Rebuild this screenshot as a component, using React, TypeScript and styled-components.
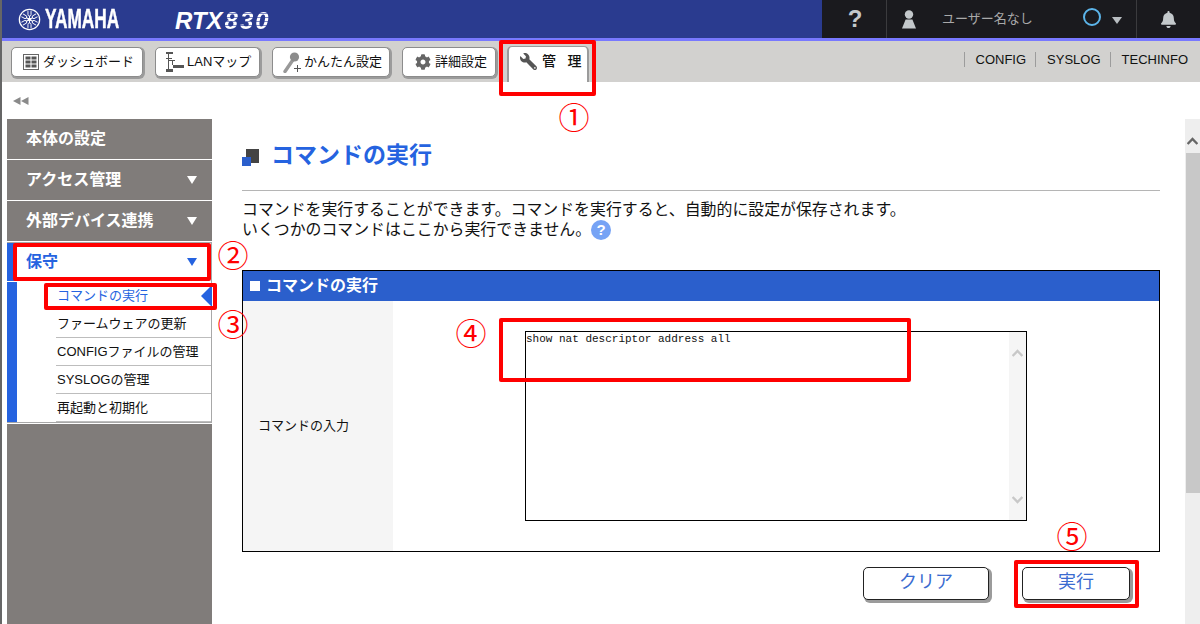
import React from 'react';
import styled, { createGlobalStyle } from 'styled-components';
import { FaBell, FaCog, FaWrench } from 'react-icons/fa';

const Global = createGlobalStyle`
  html, body { margin: 0; padding: 0; background: #fff; }
  body { font-family: "Liberation Sans", "Noto Sans CJK JP", sans-serif; overflow: hidden; }
  * { box-sizing: border-box; }
`;

const Frame = styled.div`
  position: relative; width: 1200px; height: 624px; overflow: hidden;
  border-left: 2px solid #666; display: flex; flex-direction: column;
`;
const TopBar = styled.header`
  height: 41px; flex: none; display: flex; background: #2a3b8f; border-bottom: 3px solid #7878ff;
`;
const Brand = styled.div`
  display: flex; align-items: center; padding-left: 16px; width: 821px; gap: 4px; color: #fff;
`;
const YamahaWord = styled.span`
  display: block; width: 75px; height: 38px; line-height: 38px; margin-top: -1px; font-size: 27px; font-weight: 700;
  -webkit-text-stroke: 0.5px #fff;
  transform: scaleX(.64); transform-origin: left center; white-space: nowrap;
`;
const ModelName = styled.span`
  display: flex; margin-left: 51px; font-size: 24px; font-weight: 700; font-style: italic; line-height: 38px; margin-top: 3px;
`;
const ModelDigits = styled.span`
  margin-left: 2px; letter-spacing: 2px;
  background: repeating-linear-gradient(180deg, #fff 0 3px, #7e88c4 3px 4px);
  -webkit-background-clip: text; background-clip: text; color: transparent;
`;
const UtilBar = styled.div`
  flex: 1; display: flex; background: #1a1a1e; color: #c3c8cb;
`;
const UtilCell = styled.div<{ $w: number; $pad?: number }>`
  width: ${p => p.$w}px; flex: none; display: flex; align-items: center; border-right: 1px solid #3b3b3e; padding-left: ${p => p.$pad ?? 0}px;
  &:last-child { border-right: 0; }
`;
const HelpMark = styled.span`
  width: 100%; text-align: center; font-size: 24px; font-weight: 700; line-height: 38px; padding-left: 2px;
`;
const UserName = styled.span`
  font-size: 13px; color: #a9a9a9; margin-left: 26px; width: 141px; white-space: nowrap; line-height: 38px;
`;
const Ring = styled.span`
  width: 18px; height: 18px; border: 2.5px solid #5cb5ea; border-radius: 50%; margin-top: -5px; flex: none;
`;
const Caret = styled.span`
  width: 0; height: 0; margin-left: 11px; margin-top: 2px;
  border-left: 5px solid transparent; border-right: 5px solid transparent; border-top: 7px solid #b9bec2;
`;
const BellSlot = styled.span`
  width: 100%; display: flex; justify-content: center; color: #c3c8cb; font-size: 17px;
`;

const ToolBar = styled.nav`
  height: 41px; flex: none; display: flex; background: #d2d1cf; padding: 6px 0 0 9px; gap: 12px;
`;
const ToolButton = styled.button<{ $w: number; $pad: number; $gap: number }>`
  width: ${p => p.$w}px; height: 30px; margin: 0; padding: 0 0 0 ${p => p.$pad}px; background: #fff; border: 1px solid #8c8c8c; border-radius: 5px;
  box-shadow: 1px 1px 0 1px #9b9b9b; font: inherit; font-size: 13px; color: #111; display: flex; align-items: center; gap: ${p => p.$gap}px; white-space: nowrap;
  svg { flex: none; }
`;
const ToolLabel = styled.span`
  display: block; margin-top: -4px;
`;
const ActiveTab = styled.div`
  width: 82px; height: 36px; margin: -1px 0 0 -1px; background: #fff; border: 2px solid #9b9b9b; border-bottom: 0; border-top-width: 1px;
  border-radius: 5px 5px 0 0; display: flex; align-items: flex-start; padding: 5px 0 0 11px; gap: 5px; font-size: 14px; line-height: 18px; color: #111; font-weight: 500;
  letter-spacing: -1.3px; white-space: pre;
`;
const WrenchIcon = styled(FaWrench)`
  transform: scaleX(-1); color: #555; font-size: 17px; margin-top: 1px; flex: none;
`;
const QuickLinks = styled.div`
  margin-left: auto; display: flex; align-items: flex-start; padding-top: 5px;
`;
const QuickLink = styled.a`
  font-size: 13px; line-height: 15px; height: 15px; color: #111; padding: 0 9px 0 11px; border-left: 1px solid #9c9c9c; white-space: nowrap;
  &:last-child { padding-right: 12px; }
`;

const Body = styled.div`
  flex: 1; display: flex; min-height: 0;
`;
const Side = styled.aside`
  width: 205px; margin-left: 5px; flex: none; display: flex; flex-direction: column;
`;
const Collapse = styled.div`
  height: 37px; flex: none; display: flex; align-items: flex-start; padding: 15px 0 0 6px;
`;
const MenuItem = styled.div`
  height: 40px; flex: none; margin-bottom: 1px; background: #807c7a; color: #fff; font-size: 16px; font-weight: 700; line-height: 36px; padding: 0 15px 0 19px;
  display: flex; align-items: center; justify-content: space-between;
`;
const Tri = styled.span<{ $c: string }>`
  width: 0; height: 0; border-left: 5.5px solid transparent; border-right: 5.5px solid transparent; border-top: 8px solid ${p => p.$c};
`;
const Group = styled.div`
  flex: none; border: 1px solid #a8a8a8; border-left: 0; margin-bottom: 1px; background: #fff;
`;
const GroupHead = styled.div`
  height: 38px; border-left: 10px solid #2563e0; margin-bottom: 1px; padding: 0 14px 0 9px; color: #2563e0; font-size: 16px; font-weight: 700; line-height: 36px;
  display: flex; align-items: center; justify-content: space-between;
`;
const SubList = styled.div`
  border-left: 10px solid #2563e0; padding-left: 39px;
`;
const SubItem = styled.div<{ $on?: boolean }>`
  position: relative; height: 28px; padding-left: 1px; font-size: 13px; line-height: 28px; white-space: nowrap;
  color: ${p => (p.$on ? '#2563e0' : '#111')}; border-bottom: 1px solid #bdbdbd;
`;
const SubMarker = styled.span`
  position: absolute; right: -1px; top: 3px; width: 0; height: 0;
  border-top: 11px solid transparent; border-bottom: 11px solid transparent; border-right: 11px solid #2563e0;
`;
const SideFill = styled.div`
  flex: 1; background: #807c7a;
`;
const Main = styled.main`
  flex: none; width: 973px; padding: 58px 0 0 30px;
`;
const TitleRow = styled.div`
  width: 918px; height: 51px; border-bottom: 1px solid #b5b5b5; display: flex; align-items: flex-start; gap: 13px;
`;
const TitleIcon = styled.svg`
  flex: none; margin-top: 9px;
`;
const Title = styled.h1`
  margin: 0 0 0 -1px; font-size: 23px; font-weight: 700; color: #2563e0; line-height: 30px;
`;
const Description = styled.p`
  margin: 9px 0 0; font-size: 15.9px; line-height: 20px; color: #111; white-space: nowrap;
`;
const HelpBadge = styled.span`
  display: inline-block; width: 20px; height: 20px; border-radius: 50%; background: #76a3f5; color: #fff; font-size: 15px; font-weight: 700;
  line-height: 20px; text-align: center; vertical-align: top; font-family: "Liberation Sans", sans-serif;
`;
const Panel = styled.section`
  width: 918px; height: 282px; margin-top: 30px; border: 1px solid #000;
`;
const PanelHead = styled.div`
  height: 30px; background: #2b5fcc; color: #fff; font-size: 16px; font-weight: 700; line-height: 28px; padding-left: 7px; display: flex; align-items: center; gap: 6px;
`;
const HeadSquare = styled.span`
  width: 10px; height: 10px; background: #fff; flex: none;
`;
const PanelRow = styled.div`
  height: 250px; display: flex;
`;
const RowLabel = styled.div`
  width: 150px; flex: none; background: #f5f5f5; padding: 0 0 3px 15px; font-size: 13px; display: flex; align-items: center; color: #111;
`;
const RowCell = styled.div`
  flex: 1; padding: 30px 0 0 132px;
`;
const TextBox = styled.div`
  width: 502px; height: 190px; border: 1px solid #000; display: flex;
`;
const Area = styled.textarea`
  flex: 1; border: 0; margin: 0; padding: 1px 0 0; resize: none; outline: 0; font-family: "Liberation Mono", monospace; font-size: 11px; line-height: 13px; color: #111; overflow: hidden; background: #fff;
`;
const TextScroll = styled.div`
  width: 17px; flex: none; background: #f5f5f5; display: flex; flex-direction: column; justify-content: space-between; align-items: center; padding: 17px 0 16px;
`;
const Actions = styled.div`
  width: 918px; display: flex; justify-content: flex-end; gap: 33px; padding: 15px 30px 0 0;
`;
const ActionButton = styled.button<{ $w: number }>`
  width: ${p => p.$w}px; height: 33px; margin: 0; background: #fff; border: 1px solid #222; border-radius: 5px; box-shadow: 2px 2px 0 1px #9b9b9b;
  font: inherit; font-size: 18px; line-height: 26px; color: #3a6bd0; padding: 0 0 3px;
`;
const PageScroll = styled.div`
  width: 15px; flex: none; margin-top: 37px; background: #eeeeee; display: flex; flex-direction: column;
`;
const ScrollTop = styled.div`
  height: 34px; flex: none; display: flex; align-items: flex-end; justify-content: center; padding-bottom: 8px;
`;
const ScrollThumb = styled.div`
  height: 340px; flex: none; margin-left: 1px; background: #c8c8c8;
`;

const Marker = styled.div<{ $x: number; $y: number; $w: number; $h: number }>`
  position: absolute; left: ${p => p.$x - 2}px; top: ${p => p.$y}px; width: ${p => p.$w}px; height: ${p => p.$h}px;
  border: 4px solid #ff0000; border-radius: 2px; pointer-events: none;
`;
const Num = styled.span<{ $x: number; $y: number }>`
  position: absolute; left: ${p => p.$x - 2 - 20}px; top: ${p => p.$y - 20}px; width: 40px; height: 40px; text-align: center;
  font-family: "Noto Sans CJK JP", sans-serif; font-size: 31px; line-height: 40px; color: #ff0000;
`;

const Emblem = () => (
  <svg width="23" height="23" viewBox="-12 -12 24 24" fill="none" stroke="#fff">
    <circle r="10.6" strokeWidth="1.3" />
    {[0, 60, 120, 180, 240, 300].map(a => (
      <g key={a} transform={`rotate(${a})`} strokeWidth="1">
        <path d="M0 0V-3.6M-1.6 -8.8V-5.2Q-1.6 -3.6 0 -3.6Q1.6 -3.6 1.6 -5.2V-8.8" />
      </g>
    ))}
    <circle r="1.8" fill="#fff" stroke="none" />
  </svg>
);
const UserGlyph = () => (
  <svg width="14" height="19" viewBox="0 0 14 19" fill="#c3c8cb">
    <circle cx="7" cy="4.5" r="4.2" />
    <path d="M3.6 9.5h6.8L14 18.5H0z" />
  </svg>
);
const DashIcon = () => (
  <svg width="16" height="16" viewBox="0 0 16 16">
    <rect x=".5" y=".5" width="15" height="15" fill="#fff" stroke="#666" />
    <rect x="2.5" y="2.5" width="5" height="3" fill="#555" />
    <rect x="8.5" y="2.5" width="5" height="3" fill="#555" />
    <rect x="2.5" y="6.5" width="5" height="3" fill="#555" />
    <rect x="8.5" y="6.5" width="5" height="3" fill="#555" />
    <rect x="2.5" y="10.5" width="5" height="3" fill="#555" />
    <rect x="8.5" y="10.5" width="5" height="3" fill="#555" />
  </svg>
);
const LanIcon = () => (
  <svg width="18" height="20" viewBox="0 0 18 20" fill="#555">
    <rect x="0" y="0" width="7" height="2" />
    <rect x="2" y="2" width="1" height="16" />
    <rect x="2" y="8" width="7" height="1" />
    <rect x="6" y="8" width="1" height="5" />
    <rect x="7" y="13" width="11" height="3" />
    <rect x="0" y="6" width="6" height="1" />
    <rect x="0" y="17" width="7" height="3" />
  </svg>
);
const WandIcon = () => (
  <svg width="18" height="21" viewBox="0 0 18 21">
    <path d="M2 19.5L10.5 7" stroke="#999" strokeWidth="3.4" strokeLinecap="round" />
    <circle cx="11.5" cy="5" r="4.6" fill="#8c8c8c" />
    <path d="M14.5 13v7M11 16.5h7" stroke="#555" strokeWidth="1" />
  </svg>
);
const RewindIcon = () => (
  <svg width="16" height="8" viewBox="0 0 16 8" fill="#8a8a8a">
    <path d="M0 4L7.5 0V8zM8 4L15.5 0V8z" />
  </svg>
);
const Chevron = ({ up, color }: { up?: boolean; color: string }) => (
  <svg width={11} height={8} viewBox="0 0 11 8" fill="none" stroke={color} strokeWidth="2.4">
    <path d={up ? 'M0.6 7L5.5 2L10.4 7' : 'M0.6 1L5.5 6L10.4 1'} />
  </svg>
);

export default function App() {
  return (
    <>
      <Global />
      <Frame>
        <TopBar>
          <Brand>
            <Emblem />
            <YamahaWord>YAMAHA</YamahaWord>
            <ModelName>RTX<ModelDigits>830</ModelDigits></ModelName>
          </Brand>
          <UtilBar>
            <UtilCell $w={65}><HelpMark>?</HelpMark></UtilCell>
            <UtilCell $w={250} $pad={15}>
              <UserGlyph />
              <UserName>ユーザー名なし</UserName>
              <Ring />
              <Caret />
            </UtilCell>
            <UtilCell $w={63}><BellSlot><FaBell /></BellSlot></UtilCell>
          </UtilBar>
        </TopBar>
        <ToolBar>
          <ToolButton $w={132} $pad={11} $gap={4}><DashIcon /><ToolLabel>ダッシュボード</ToolLabel></ToolButton>
          <ToolButton $w={105} $pad={10} $gap={3}><LanIcon /><ToolLabel>LANマップ</ToolLabel></ToolButton>
          <ToolButton $w={118} $pad={10} $gap={3}><WandIcon /><ToolLabel>かんたん設定</ToolLabel></ToolButton>
          <ToolButton $w={94} $pad={12} $gap={4}><FaCog color="#666" size={16} /><ToolLabel>詳細設定</ToolLabel></ToolButton>
          <ActiveTab><WrenchIcon /><span>管　理</span></ActiveTab>
          <QuickLinks>
            <QuickLink>CONFIG</QuickLink>
            <QuickLink>SYSLOG</QuickLink>
            <QuickLink>TECHINFO</QuickLink>
          </QuickLinks>
        </ToolBar>
        <Body>
          <Side>
            <Collapse><RewindIcon /></Collapse>
            <MenuItem>本体の設定</MenuItem>
            <MenuItem>アクセス管理<Tri $c="#fff" /></MenuItem>
            <MenuItem>外部デバイス連携<Tri $c="#fff" /></MenuItem>
            <Group>
              <GroupHead>保守<Tri $c="#2563e0" /></GroupHead>
              <SubList>
                <SubItem $on>コマンドの実行<SubMarker /></SubItem>
                <SubItem>ファームウェアの更新</SubItem>
                <SubItem>CONFIGファイルの管理</SubItem>
                <SubItem>SYSLOGの管理</SubItem>
                <SubItem>再起動と初期化</SubItem>
              </SubList>
            </Group>
            <SideFill />
          </Side>
          <Main>
            <TitleRow>
              <TitleIcon width="17" height="17" viewBox="0 0 17 17">
                <rect x="4" y="0" width="13" height="14" fill="#444" />
                <rect x="0" y="8" width="9" height="9" fill="#2b5fcc" />
              </TitleIcon>
              <Title>コマンドの実行</Title>
            </TitleRow>
            <Description>
              コマンドを実行することができます。コマンドを実行すると、自動的に設定が保存されます。<br />
              いくつかのコマンドはここから実行できません。<HelpBadge>?</HelpBadge>
            </Description>
            <Panel>
              <PanelHead><HeadSquare />コマンドの実行</PanelHead>
              <PanelRow>
                <RowLabel>コマンドの入力</RowLabel>
                <RowCell>
                  <TextBox>
                    <Area readOnly spellCheck={false} defaultValue="show nat descriptor address all" />
                    <TextScroll>
                      <Chevron up color="#c8c8c8" />
                      <Chevron color="#c8c8c8" />
                    </TextScroll>
                  </TextBox>
                </RowCell>
              </PanelRow>
            </Panel>
            <Actions>
              <ActionButton $w={126}>クリア</ActionButton>
              <ActionButton $w={108}>実行</ActionButton>
            </Actions>
          </Main>
          <PageScroll>
            <ScrollTop><Chevron up color="#666" /></ScrollTop>
            <ScrollThumb />
          </PageScroll>
        </Body>
        <Marker $x={499} $y={40} $w={97} $h={56} />
        <Marker $x={13} $y={243} $w={198} $h={38} />
        <Marker $x={44} $y={283} $w={173} $h={27} />
        <Marker $x={499} $y={318} $w={412} $h={64} />
        <Marker $x={1014} $y={560} $w={125} $h={48} />
        <Num $x={574} $y={116}>①</Num>
        <Num $x={233} $y={254}>②</Num>
        <Num $x={233} $y={323}>③</Num>
        <Num $x={471} $y={332}>④</Num>
        <Num $x={1072} $y={535}>⑤</Num>
      </Frame>
    </>
  );
}
